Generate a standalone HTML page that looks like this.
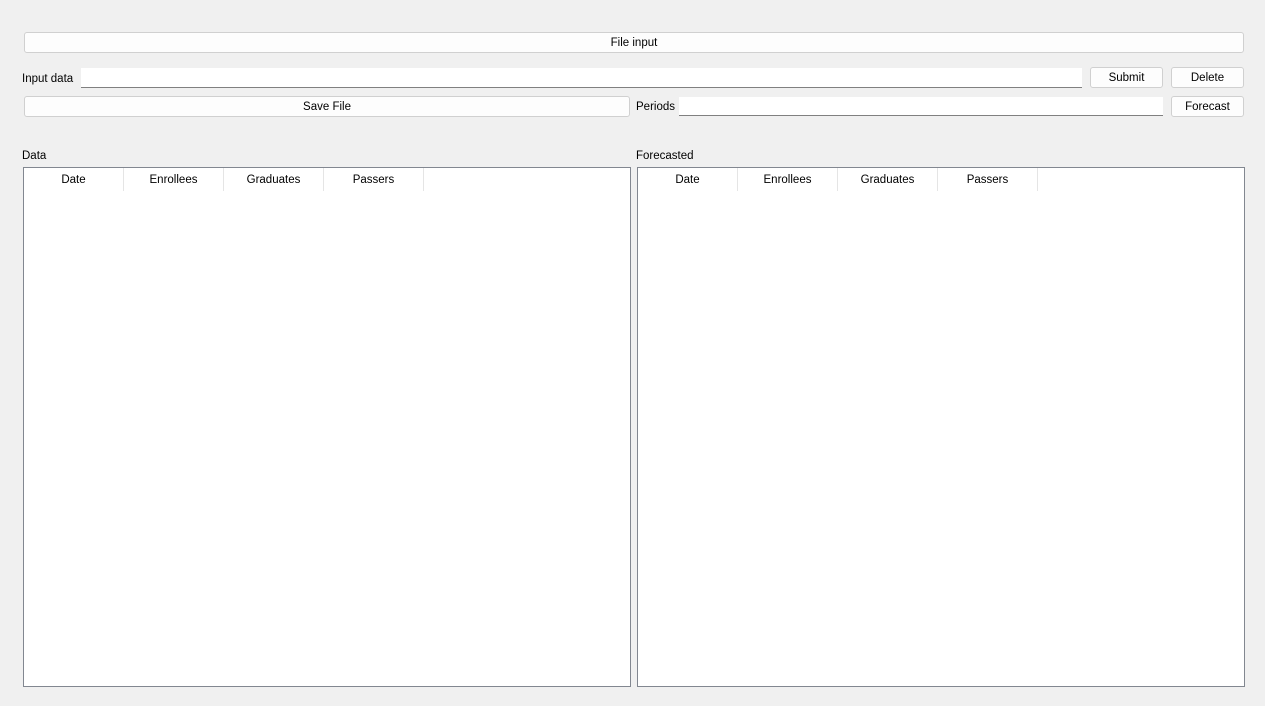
<!DOCTYPE html>
<html><head><style>
body{margin:0;width:1265px;height:706px;background:#f0f0f0;font-family:"Liberation Sans",sans-serif;font-size:11.5px;color:#000;position:relative;overflow:hidden}
.a{position:absolute;box-sizing:border-box}
.btn{background:#fdfdfd;border:1px solid #d0d0d0;border-radius:3px;text-align:center;line-height:19px;padding-top:1px}
.inp{background:#fff;border-bottom:1px solid #808080}
.lbl{line-height:14px}
.tbl{background:#fff;border:1px solid #828790}
.hd{position:absolute;top:0;height:23px;width:100px;border-right:1px solid #e5e5e5;text-align:center;line-height:25px;box-sizing:border-box}
</style></head><body>
<div class="a btn" style="left:24px;top:32px;width:1220px;height:21px">File input</div>
<div class="a lbl" style="left:22px;top:72px">Input data</div>
<div class="a inp" style="left:81px;top:68px;width:1001px;height:20px"></div>
<div class="a btn" style="left:1090px;top:67px;width:73px;height:21px">Submit</div>
<div class="a btn" style="left:1171px;top:67px;width:73px;height:21px">Delete</div>
<div class="a btn" style="left:24px;top:96px;width:606px;height:21px">Save File</div>
<div class="a lbl" style="left:636px;top:100px">Periods</div>
<div class="a inp" style="left:679px;top:97px;width:484px;height:19px"></div>
<div class="a btn" style="left:1171px;top:96px;width:73px;height:21px">Forecast</div>
<div class="a lbl" style="left:22px;top:149px">Data</div>
<div class="a lbl" style="left:636px;top:149px">Forecasted</div>
<div class="a tbl" style="left:23px;top:167px;width:608px;height:520px">
<div class="hd" style="left:0">Date</div><div class="hd" style="left:100px">Enrollees</div><div class="hd" style="left:200px">Graduates</div><div class="hd" style="left:300px">Passers</div></div>
<div class="a tbl" style="left:637px;top:167px;width:608px;height:520px">
<div class="hd" style="left:0">Date</div><div class="hd" style="left:100px">Enrollees</div><div class="hd" style="left:200px">Graduates</div><div class="hd" style="left:300px">Passers</div></div>
</body></html>
